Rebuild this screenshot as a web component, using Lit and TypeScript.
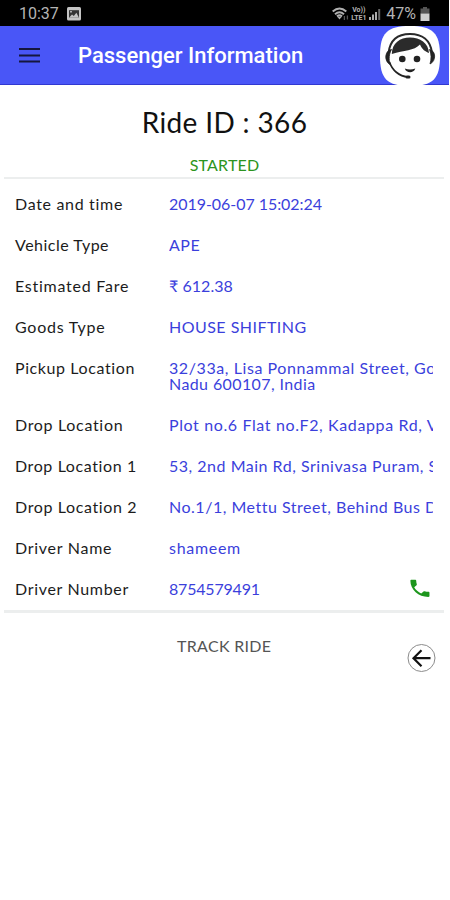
import { LitElement, html, css, svg } from "lit";
import { customElement } from "lit/decorators.js";

interface Line {
  text: string;
  track: number;
}

interface Row {
  label: string;
  track: number;
  value: Line[];
  call?: boolean;
}

const ROWS: Row[] = [
  { label: "Date and time", track: 0.68, value: [{ text: "2019-06-07 15:02:24", track: -0.05 }] },
  { label: "Vehicle Type", track: 0.5, value: [{ text: "APE", track: 0.5 }] },
  { label: "Estimated Fare", track: 0.75, value: [{ text: "₹ 612.38", track: 0.05 }] },
  { label: "Goods Type", track: 0.75, value: [{ text: "HOUSE SHIFTING", track: 0.47 }] },
  {
    label: "Pickup Location",
    track: 0.6,
    value: [
      { text: "32/33a, Lisa Ponnammal Street, Gowtham", track: 0.58 },
      { text: "Nadu 600107, India", track: 0.4 },
    ],
  },
  { label: "Drop Location", track: 0.68, value: [{ text: "Plot no.6 Flat no.F2, Kadappa Rd, Villivakkam", track: 0.62 }] },
  { label: "Drop Location 1", track: 0.6, value: [{ text: "53, 2nd Main Rd, Srinivasa Puram, Sri", track: 0.51 }] },
  { label: "Drop Location 2", track: 0.63, value: [{ text: "No.1/1, Mettu Street, Behind Bus Depot", track: 0.51 }] },
  { label: "Driver Name", track: 0.73, value: [{ text: "shameem", track: 0.7 }] },
  { label: "Driver Number", track: 0.68, value: [{ text: "8754579491", track: -0.2 }], call: true },
];

@customElement("app-root")
export class AppRoot extends LitElement {
  static styles = css`
    :host {
      display: block;
      width: 450px;
      height: 900px;
      overflow: hidden;
      background: #fff;
      font-family: Lato, "Liberation Sans", sans-serif;
      color: #1c1c1c;
    }
    .screen { width: 449px; }
    .status {
      display: flex;
      align-items: center;
      box-sizing: border-box;
      height: 26px;
      padding: 2px 19px 0 19px;
      background: #000;
      color: #b4b4b4;
      font: 16px/24px Roboto, sans-serif;
    }
    .clock { width: 48px; }
    .spacer { flex: 1; }
    .pct { margin: 0 4px 0 5px; letter-spacing: 0; }
    svg { display: block; flex: none; }
    .volte {
      display: flex;
      flex-direction: column;
      align-items: center;
      width: 17px;
      margin: 0 2px 0 1px;
      font: bold 7px/8px Roboto, sans-serif;
    }
    .bar {
      display: flex;
      align-items: center;
      height: 58px;
      padding: 0 9px 0 19px;
      background: #4956f7;
      border-bottom: 1px solid #3138d0;
      color: #fff;
    }
    .title {
      flex: 1;
      margin-left: 38px;
      font: 500 22px/26px Roboto, sans-serif;
      padding-top: 1px;
    }
    .agent { margin-top: 1px; }
    .ride {
      height: 40px;
      margin-top: 17px;
      font-size: 28px;
      line-height: 40px;
      letter-spacing: 0.35px;
      text-align: center;
      color: #111;
    }
    .started {
      margin-top: 13px;
      height: 20px;
      line-height: 20px;
      font-size: 16px;
      letter-spacing: 0.2px;
      text-align: center;
      color: #2c9420;
    }
    .rule { height: 2px; margin: 2px 5px 0 4px; background: #eceeee; }
    .rule.last { height: 3px; margin-top: 0; }
    .rows { padding: 4.5px 16px 0 15px; }
    .row {
      display: flex;
      padding: 12.5px 0;
      font-size: 16px;
      line-height: 16px;
      white-space: nowrap;
    }
    .label { width: 154px; flex: none; }
    .value { flex: 1; min-width: 0; overflow: hidden; color: #3b3fdc; margin: -4px 0; padding: 4px 0; }
    .phone { margin: -5px 1.5px -3px 0; }
    .foot { display: flex; }
    .track {
      flex: 1;
      margin: 23px 0 0 177px;
      font-size: 16px;
      line-height: 20px;
      letter-spacing: 0.3px;
      color: #555;
    }
    .back { margin: 31px 13px 0 0; }
  `;

  private picture() {
    return svg`<svg width="14" height="14" viewBox="0 0 14 14">
      <rect width="14" height="13.4" rx="1.5" fill="#c4c4c4"/>
      <path d="M2 10.800V3.200h10v7.600z" fill="#333"/>
      <path d="M2 10.800l3-3.200 1.800 1.400 2.600-3.200 2.600 5z" fill="#c4c4c4"/>
      <path d="M3 4h2v1.600H3z" fill="#aaa"/>
    </svg>`;
  }

  private wifi() {
    return svg`<svg width="17" height="14" viewBox="0 0 17 14" fill="none" stroke="#b0b0b0" stroke-width="2">
      <path d="M.7 4.6Q7.500-1.600 14.300 4.600"/><path d="M3 7.200Q7.500 3.200 12 7.200"/><path d="M5 9.400Q7.500 7.400 10 9.400"/>
      <path d="M5.500 10h4l-2 2.500z" fill="#b0b0b0" stroke="none"/>
      <path d="M12.400 13V9M15.400 8.500v4" stroke="#555" stroke-width="1.3"/>
    </svg>`;
  }

  private signal() {
    return svg`<svg width="12" height="12" viewBox="0 0 12 12">
      <path d="M0 9h2v3H0zM3 6.500h2V12H3zM6 4h2v8H6z" fill="#aaa"/><path d="M9.200 1h2v11h-2z" fill="#666"/>
    </svg>`;
  }

  private battery() {
    return svg`<svg width="10" height="14" viewBox="0 0 10 14">
      <path d="M3 0h4v1.600h2.500V7h-9V1.600H3z" fill="#555"/><path d="M.5 6.600h9V14h-9z" fill="#cfcfcf"/>
    </svg>`;
  }

  private agent() {
    return svg`<svg class="agent" width="60" height="60" viewBox="0 0 60 60">
      <path d="M30 0C53 0 60 7 60 30S53 60 30 60 0 53 0 30 7 0 30 0z" fill="#fff"/>
      <path d="M8.500 27C10 14 18 8 30 8s20.500 6 22 19" fill="none" stroke="#2a2a2a" stroke-width="2"/>
      <path d="M11.800 28C12 17 20 11.500 30 11.500S48.500 17 49 27C45.500 26 42 23.500 40 18.600 34 25 24 24.500 11.800 28z" fill="#2b2b2b"/>
      <path d="M11.500 23.500C5 24 3.500 35 10 38.500 8.500 33 9 28 11.500 23.500zM49.500 23.500c6.500 1 7 11.500.5 14.500 1.500-5 1.500-10-.5-14.500z" fill="#222" stroke="#222" stroke-width=".8"/>
      <path d="M9.500 36C12 44 19 50.300 28 51" fill="none" stroke="#222" stroke-width="1.700"/>
      <rect x="25.500" y="49.400" width="5" height="3" rx="1.500" fill="#222"/>
      <circle cx="22.300" cy="33" r="3.300" fill="#222"/><circle cx="37" cy="33" r="3.300" fill="#222"/>
      <path d="M24.800 42.500q5.200 2 10.500 0c-1.500 5-9 5-10.500 0z" fill="#222"/>
    </svg>`;
  }

  private phone() {
    return svg`<svg class="phone" width="24" height="24" viewBox="0 0 24 24">
      <path transform="translate(-.8 1) scale(1.06 .95)" fill="#1d961d" d="M6.620 10.790c1.440 2.830 3.760 5.140 6.590 6.590l2.200-2.200c.27-.27.67-.36 1.020-.24 1.120.37 2.330.57 3.570.57.55 0 1 .45 1 1V20c0 .55-.45 1-1 1C10.610 21 3 13.390 3 4c0-.55.45-1 1-1h3.500c.55 0 1 .45 1 1 0 1.250.2 2.450.57 3.570.11.35.03.74-.25 1.020z"/>
    </svg>`;
  }

  render() {
    return html`
      <div class="screen">
        <div class="status">
          <span class="clock">10:37</span>${this.picture()}
          <span class="spacer"></span>
          ${this.wifi()}
          <span class="volte"><span>Vo))</span><span>LTE1</span></span>
          ${this.signal()}
          <span class="pct">47%</span>${this.battery()}
        </div>
        <div class="bar">
          <svg width="21" height="16" viewBox="0 0 21 16">
            <path d="M0 2h21M0 8.500h21M0 14.500h21" stroke="#15163f" stroke-width="2.2" />
          </svg>
          <div class="title">Passenger Information</div>
          ${this.agent()}
        </div>
        <div class="ride">Ride ID : 366</div>
        <div class="started">STARTED</div>
        <div class="rule"></div>
        <div class="rows">
          ${ROWS.map(
            (r) => html`<div class="row">
              <div class="label" style="letter-spacing:${r.track}px">${r.label}</div>
              <div class="value">
                ${r.value.map((line) => html`<div style="letter-spacing:${line.track}px">${line.text}</div>`)}
              </div>
              ${r.call ? this.phone() : null}
            </div>`
          )}
        </div>
        <div class="rule last"></div>
        <div class="foot">
          <div class="track">TRACK RIDE</div>
          <svg class="back" width="29" height="29" viewBox="0 0 29 29" fill="none">
            <circle cx="14.500" cy="14" r="13.500" stroke="#8c8c8c" stroke-width="1" />
            <path d="M23.500 14.200H7M14.500 6.200l-8 8 8 8" stroke="#111" stroke-width="2.2" />
          </svg>
        </div>
      </div>
    `;
  }
}
